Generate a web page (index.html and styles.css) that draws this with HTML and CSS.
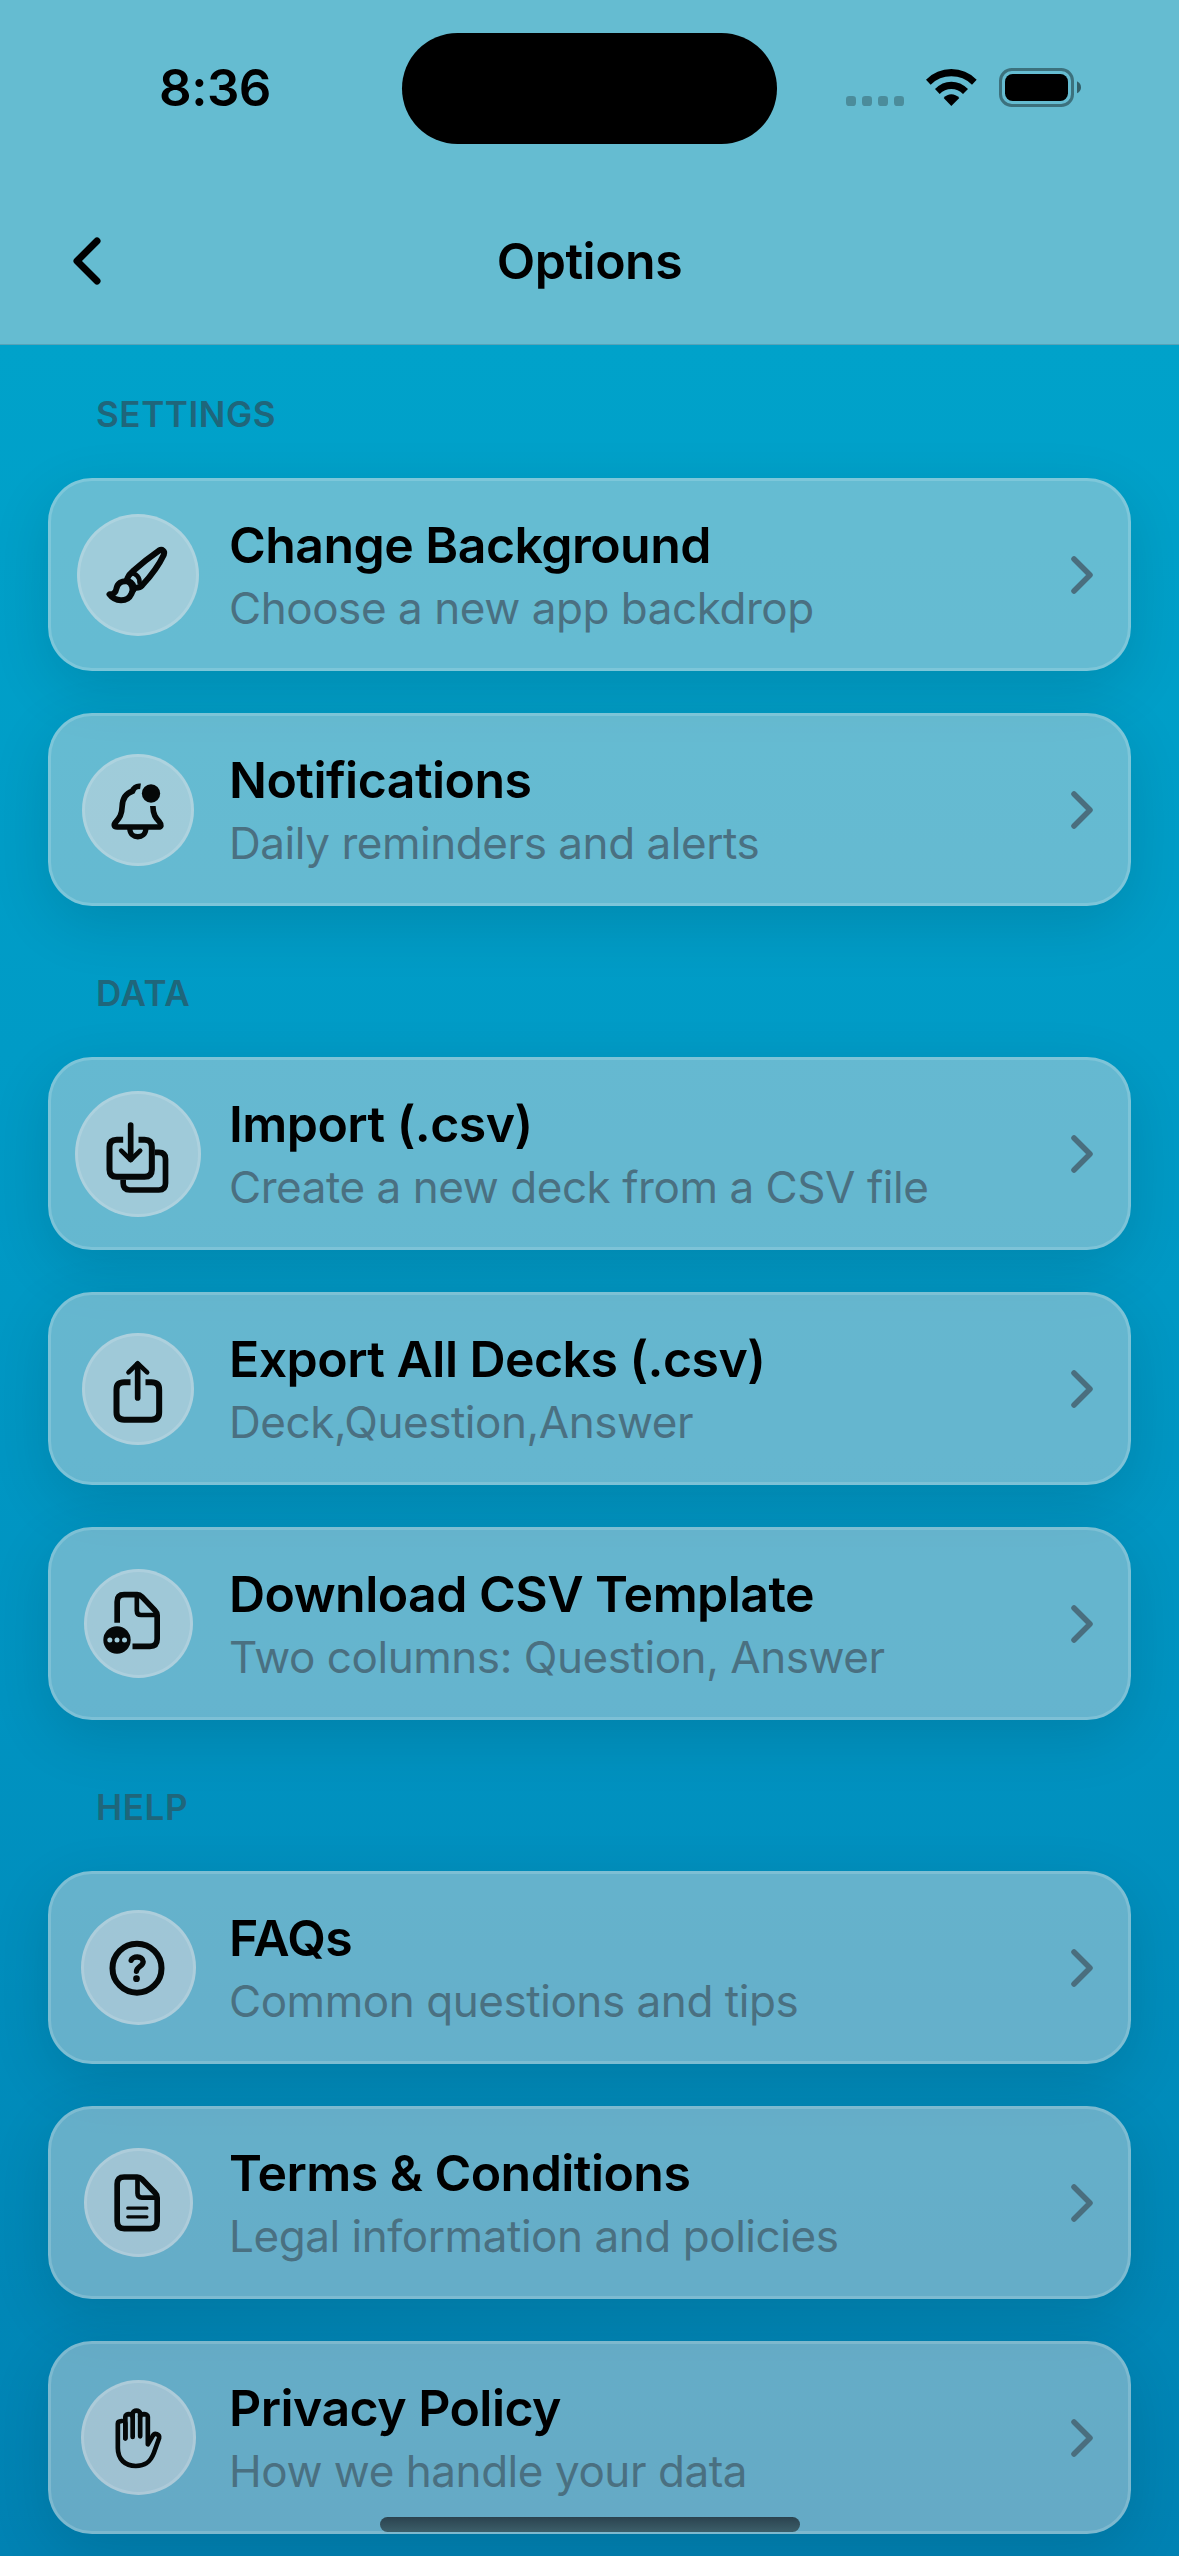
FILE: index.html
```html
<!DOCTYPE html>
<html lang="en">
<head>
    <meta charset="UTF-8">
    <meta name="viewport" content="width=device-width, initial-scale=1.0">
    <title>Options</title>
    <link rel="stylesheet" href="styles.css">
</head>
<body>

    <header class="header">
        <div class="status-bar">
            <div class="time">8:36</div>
            <div class="island"></div>
            <svg class="status-icons" viewBox="78 54 705 117">
                <g opacity="0.25">
                    <rect x="78" y="138" width="30" height="30" rx="10"/>
                    <rect x="126" y="138" width="30" height="30" rx="10"/>
                    <rect x="174" y="138" width="30" height="30" rx="10"/>
                    <rect x="222" y="138" width="30" height="30" rx="10"/>
                </g>
                <path d="M318 89Q350 57 394 57Q438 57 470 89L456 104Q430 79 394 79Q358 79 332 104Z"/>
                <path d="M345 117Q366 95 394 95Q422 95 444 117L429 132Q414 117 394 117Q374 117 359 132Z"/>
                <path d="M371 144Q381 133 394 133Q407 133 418 144L394 168Z"/>
                <rect x="541.5" y="58.500" width="216" height="108" rx="34" fill="none" stroke="#000" stroke-width="9" opacity="0.4"/>
                <rect x="555" y="72" width="189" height="81" rx="23"/>
                <path d="M771 94Q783 100 783 112Q783 124 771 130Z" opacity="0.5"/>
            </svg>
        </div>
        <nav class="nav-bar">
            <svg class="back" viewBox="0 0 29 48"><path d="M25 4L5 24L25 44"/></svg>
            <h1>Options</h1>
        </nav>
    </header>

    <main>
        <section>
            <h2>SETTINGS</h2>
            <div class="card">
                <div class="slot">
                    <div class="circle brush">
                        <svg viewBox="55.500 43 360 360">
                            <path d="M204 232Q208 222 220 212Q260 176 298 150C308 144 317 151 313 162C297 196 272 228 248 254Q240 262 228 261"/>
                            <path d="M215 217C230 218 241 231 240 245" stroke-width="14"/>
                            <path d="M202 239C217 245 224 255 222 267"/>
                            <path d="M150 281C160 282 169 276 171 263C174 247 188 240 203 242C218 248 223 265 216 279C203 307 166 303 150 281Z"/>
                        </svg>
                    </div>
                </div>
                <div class="text">
                    <h3>Change Background</h3>
                    <p>Choose a new app backdrop</p>
                </div>
                <svg class="chevron" viewBox="0 0 22 38"><path d="M3 3L19 19L3 35"/></svg>
            </div>
            <div class="card">
                <div class="slot">
                    <div class="circle bell">
                        <svg viewBox="55.500 43 360 360">
                            <path d="M243 152C230 150 222 158 219 167C196 174 189 190 188 212C187 238 180 246 169 259C161 268 164 274 173 274H296C306 274 307 267 300 259C289 247 281 239 280 211" stroke-linecap="butt" stroke-width="17"/>
                            <path d="M211 280C212 311 258 311 259 280" stroke-linecap="butt" stroke-width="16"/>
                            <circle class="solid" cx="274.500" cy="173.500" r="27.500"/>
                        </svg>
                    </div>
                </div>
                <div class="text">
                    <h3>Notifications</h3>
                    <p>Daily reminders and alerts</p>
                </div>
                <svg class="chevron" viewBox="0 0 22 38"><path d="M3 3L19 19L3 35"/></svg>
            </div>
        </section>

        <section>
            <h2>DATA</h2>
            <div class="card">
                <div class="slot">
                    <div class="circle import">
                        <svg viewBox="55.500 40 360 360">
                            <path d="M191 177H172Q150 177 150 199V267Q150 288 172 288H255Q277 288 277 267V199Q277 177 255 177H237" stroke-linecap="butt"/>
                            <path d="M286 215H298Q318 215 318 235V308Q318 328 298 328H211Q191 328 191 308V297" stroke-linecap="butt" stroke-width="17"/>
                            <path d="M213.500 133V236" stroke-width="17"/>
                            <path d="M185 210L213.500 238L242 210" stroke-width="14"/>
                        </svg>
                    </div>
                </div>
                <div class="text">
                    <h3>Import (.csv)</h3>
                    <p>Create a new deck from a CSV file</p>
                </div>
                <svg class="chevron" viewBox="0 0 22 38"><path d="M3 3L19 19L3 35"/></svg>
            </div>
            <div class="card">
                <div class="slot">
                    <div class="circle export">
                        <svg viewBox="55.500 40 360 360">
                            <path d="M213 200H194Q171 200 171 222V290Q171 312 194 312H276Q299 312 299 290V222Q299 200 276 200H258" stroke-linecap="butt"/>
                            <path d="M234.500 146V247" stroke-width="17"/>
                            <path d="M207 170L234.500 143L263 170" stroke-width="14"/>
                        </svg>
                    </div>
                </div>
                <div class="text">
                    <h3>Export All Decks (.csv)</h3>
                    <p>Deck,Question,Answer</p>
                </div>
                <svg class="chevron" viewBox="0 0 22 38"><path d="M3 3L19 19L3 35"/></svg>
            </div>
            <div class="card">
                <div class="slot">
                    <div class="circle doc">
                        <svg viewBox="55.500 40 360 360">
                            <path d="M173 216V153Q173 132 194 132H233Q241 132 247 138L287 180Q293 186 293 194V265Q293 287 271 287H219" stroke-linecap="butt" stroke-width="17"/>
                            <path d="M232 132V180Q232 193 245 193H293" stroke-width="14" stroke-linecap="butt"/>
                            <circle class="solid" cx="172.500" cy="268" r="41"/>
                            <g class="dots">
                                <circle cx="151" cy="268" r="7.500"/>
                                <circle cx="172.500" cy="268" r="7.500"/>
                                <circle cx="195" cy="268" r="7.500"/>
                            </g>
                        </svg>
                    </div>
                </div>
                <div class="text">
                    <h3>Download CSV Template</h3>
                    <p>Two columns: Question, Answer</p>
                </div>
                <svg class="chevron" viewBox="0 0 22 38"><path d="M3 3L19 19L3 35"/></svg>
            </div>
        </section>

        <section>
            <h2>HELP</h2>
            <div class="card">
                <div class="slot">
                    <div class="circle help">
                        <svg viewBox="55.500 37 360 360">
                            <circle cx="232.500" cy="217.500" r="73.500"/>
                            <path d="M215 194C218 181 250 179 251 198C251 212 232 212 231 227" stroke-width="16"/>
                            <circle class="solid" cx="231" cy="249" r="10"/>
                        </svg>
                    </div>
                </div>
                <div class="text">
                    <h3>FAQs</h3>
                    <p>Common questions and tips</p>
                </div>
                <svg class="chevron" viewBox="0 0 22 38"><path d="M3 3L19 19L3 35"/></svg>
            </div>
            <div class="card">
                <div class="slot">
                    <div class="circle doc">
                        <svg viewBox="55.500 37 360 360">
                            <path d="M194 139H233Q241 139 247 145L287 187Q293 193 293 201V272Q293 294 271 294H194Q173 294 173 272V160Q173 139 194 139Z" stroke-width="17"/>
                            <path d="M234 139V188Q234 201 247 201H293" stroke-width="14" stroke-linecap="butt"/>
                            <path d="M205 232.500H262M205 258.500H262" stroke-width="10"/>
                        </svg>
                    </div>
                </div>
                <div class="text">
                    <h3>Terms &amp; Conditions</h3>
                    <p>Legal information and policies</p>
                </div>
                <svg class="chevron" viewBox="0 0 22 38"><path d="M3 3L19 19L3 35"/></svg>
            </div>
            <div class="card">
                <div class="slot">
                    <div class="circle hand">
                        <svg viewBox="55.500 37 360 360">
                            <g stroke-width="14">
                                <path d="M197.500 218V172C197.500 164 175 164 175 174V247C175 281 197 301 229 301C255 301 272 291 283 262L299 217C302 206 285 199 279 212L265 236V153C265 143 242 143 242 153"/>
                                <path d="M197.500 218V153C197.500 143 219 143 219 153"/>
                                <path d="M219.500 214V144C219.500 132 242 132 242 144V212"/>
                            </g>
                        </svg>
                    </div>
                </div>
                <div class="text">
                    <h3>Privacy Policy</h3>
                    <p>How we handle your data</p>
                </div>
                <svg class="chevron" viewBox="0 0 22 38"><path d="M3 3L19 19L3 35"/></svg>
            </div>
        </section>
    </main>

    <div class="home-indicator"></div>

</body>
</html>
```

FILE: styles.css
```css
* {
    box-sizing: border-box;
}
body {
    margin: 0;
    height: 2556px;
    overflow: hidden;
    font-family: Inter, "Liberation Sans", sans-serif;
    color: #000;
    background: linear-gradient(#00a6ce 0, #00a2ca 344px, #009bc6 1050px, #0093c1 1700px, #0082b3 2556px);
}
h1, h2, h3, p {
    margin: 0;
}
.header {
    height: 345px;
    background: #65bcd1;
    border-bottom: 1px solid #56a3b8;
}
.status-bar {
    display: grid;
    grid-template-columns: 402px 375px 1fr;
    align-items: center;
    height: 177px;
}
.time {
    padding: 0 0 2px 28px;
    text-align: center;
    font-size: 51px;
    font-weight: 600;
    letter-spacing: -0.5px;
}
.island {
    height: 111px;
    border-radius: 56px;
    background: #000;
}
.status-icons {
    justify-self: end;
    width: 235px;
    height: 39px;
    margin: 0 98px 2px 0;
}
.nav-bar {
    display: grid;
    grid-template-columns: 200px 1fr 200px;
    align-items: center;
    height: 168px;
}
.nav-bar h1 {
    text-align: center;
    font-size: 50px;
    font-weight: 600;
    letter-spacing: -0.5px;
}
.back {
    width: 29px;
    height: 48px;
    margin-left: 72px;
    fill: none;
    stroke: #000;
    stroke-width: 7;
    stroke-linecap: round;
    stroke-linejoin: round;
}
main {
    padding: 0 48px;
}
section {
    position: relative;
    z-index: 0;
    display: flex;
    flex-direction: column;
    gap: 42px;
}
section h2 {
    height: 109px;
    margin-bottom: -42px;
    padding: 24px 0 0 48px;
    font-size: 35px;
    line-height: 43px;
    font-weight: 600;
    letter-spacing: 0.6px;
    color: #1f667b;
}
section:first-child h2 {
    height: 133px;
    padding-top: 48px;
}
section + section {
    margin-top: 42px;
}
.card {
    position: relative;
    display: grid;
    grid-template-columns: 174px 1fr 22px;
    align-items: center;
    height: 193px;
    padding-right: 35px;
    border: 3px solid rgba(255, 255, 255, 0.16);
    border-radius: 44px;
    background: rgba(252, 230, 225, 0.4);
}
.card::before {
    content: "";
    position: absolute;
    z-index: -1;
    inset: -3px;
    border-radius: 44px;
    box-shadow: 0 18px 60px rgba(0, 0, 0, 0.12);
}
.slot {
    display: flex;
    justify-content: center;
}
.circle {
    display: flex;
    align-items: center;
    justify-content: center;
    width: 112px;
    height: 112px;
    border: 3px solid rgba(255, 255, 255, 0.14);
    border-radius: 50%;
    background: rgba(255, 232, 232, 0.38);
}
.circle.brush {
    width: 122px;
    height: 122px;
}
.circle.import {
    width: 126px;
    height: 126px;
}
.circle.doc {
    width: 109px;
    height: 109px;
}
.circle.help, .circle.hand {
    width: 115px;
    height: 115px;
}
.circle svg {
    flex: none;
    width: 120px;
    height: 120px;
    fill: none;
    stroke: #050808;
    stroke-width: 18;
    stroke-linecap: round;
    stroke-linejoin: round;
}
.circle .solid {
    fill: #050808;
    stroke: none;
}
.circle .dots {
    fill: #9fcbda;
    stroke: none;
}
.text {
    padding: 2px 0 0 4px;
    white-space: nowrap;
}
.text h3 {
    font-size: 50px;
    line-height: 61px;
    font-weight: 600;
    letter-spacing: -0.55px;
}
.text p {
    margin-top: 4px;
    font-size: 44px;
    line-height: 56px;
    letter-spacing: -0.45px;
    color: #4a7081;
}
.chevron {
    width: 22px;
    height: 38px;
    fill: none;
    stroke: #4a6e7e;
    stroke-width: 5.5;
    stroke-linecap: round;
    stroke-linejoin: round;
}
.home-indicator {
    position: fixed;
    z-index: 1;
    left: 380px;
    bottom: 24px;
    width: 420px;
    height: 15px;
    border-radius: 8px;
    background: linear-gradient(#2b434f, #3c5e69);
}
```
